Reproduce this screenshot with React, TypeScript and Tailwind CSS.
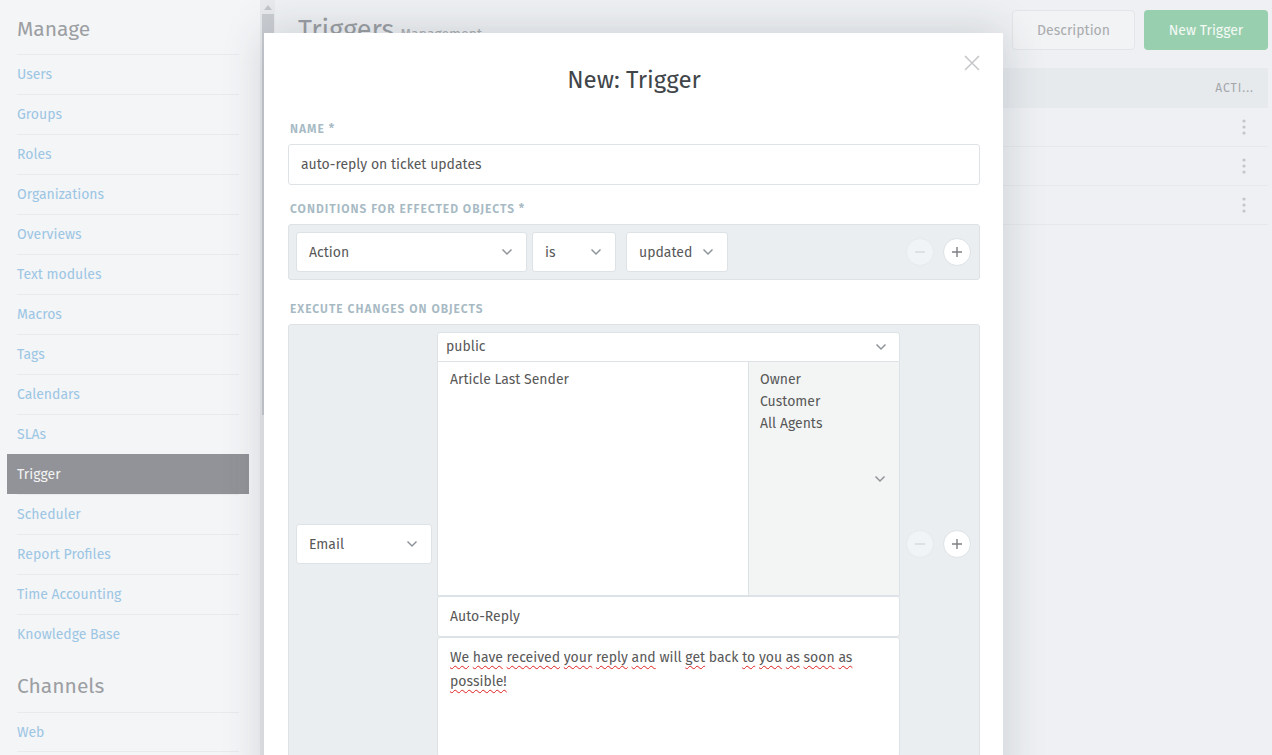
const manageItems = [
  "Users",
  "Groups",
  "Roles",
  "Organizations",
  "Overviews",
  "Text modules",
  "Macros",
  "Tags",
  "Calendars",
  "SLAs",
  "Trigger",
  "Scheduler",
  "Report Profiles",
  "Time Accounting",
  "Knowledge Base",
];

const Chevron = ({ className = "" }: { className?: string }) => (
  <svg width="12" height="8" viewBox="0 0 12 8" className={className}>
    <path d="M1.5 1.5 L6 6 L10.5 1.5" fill="none" stroke="#8f9498" strokeWidth="1.5" />
  </svg>
);

const Select = ({ label, width }: { label: string; width: string }) => (
  <div
    className={`${width} h-[40px] bg-white border border-[#dde2e6] rounded-[3px] flex items-center justify-between pl-[12px] pr-[13px] text-[14px] text-[#585858]`}
  >
    <span>{label}</span>
    <Chevron />
  </div>
);

const RoundButtons = () => (
  <div className="flex gap-[9px]">
    <div className="w-[28px] h-[28px] rounded-full bg-[#f1f4f6] border border-[#e6eaed] flex items-center justify-center">
      <svg width="10" height="10" viewBox="0 0 10 10">
        <path d="M0 5 H10" stroke="#d3d8dc" strokeWidth="1.4" />
      </svg>
    </div>
    <div className="w-[28px] h-[28px] rounded-full bg-white border border-[#dde2e6] flex items-center justify-center">
      <svg width="10" height="10" viewBox="0 0 10 10">
        <path d="M0 5 H10 M5 0 V10" stroke="#7d8084" strokeWidth="1.4" />
      </svg>
    </div>
  </div>
);

const Label = ({ children }: { children: string }) => (
  <div className="text-[12px] tracking-[1px] text-[#a7bac4] font-semibold uppercase pl-[2px] leading-[16px]">
    {children}
  </div>
);

const Wavy = ({ children }: { children: string }) => (
  <span className="underline decoration-wavy decoration-[#e02020] decoration-[1px] underline-offset-[3px]">
    {children}
  </span>
);

export default function App() {
  return (
    <div className="relative w-[1272px] h-[755px] overflow-hidden flex bg-[#eef0f3] font-['Fira_Sans',Lato,sans-serif]">
      {/* sidebar */}
      <div className="w-[260px] h-full bg-[#f4f5f7] pl-[7px] pr-[11px]">
        <div className="h-[54px] flex items-center px-[10px] pt-[5px] text-[21px] text-[#9c9fa3]">Manage</div>
        {manageItems.map((item) =>
          item === "Trigger" ? (
            <div
              key={item}
              className="h-[40px] flex items-center px-[10px] bg-[#929398] text-[14px] text-[#f3f3f3]"
            >
              {item}
            </div>
          ) : (
            <div key={item} className="mx-[10px] h-[40px] flex items-center border-t border-[#e8eaed] text-[14px] text-[#9cc6e4]">
              {item}
            </div>
          )
        )}
        <div className="h-[58px] flex items-center px-[10px] pt-[8px] text-[21px] text-[#9c9fa3]">Channels</div>
        <div className="mx-[10px] h-[40px] flex items-center border-t border-b border-[#e8eaed] text-[14px] text-[#9cc6e4]">
          Web
        </div>
      </div>

      {/* scrollbar */}
      <div className="w-[15px] h-full bg-[#e7e9ec] flex flex-col items-center">
        <div className="h-[14px] flex items-center justify-center">
          <svg width="8" height="5" viewBox="0 0 8 5">
            <path d="M0 5 L4 0 L8 5 Z" fill="#c2c5ca" />
          </svg>
        </div>
        <div className="w-[12px] h-[401px] bg-[#c9ccd1]" />
      </div>

      {/* main */}
      <div className="flex-1 pl-[23px] pr-[4px]">
        <div className="h-[68px] flex items-start justify-between pt-[10px]">
          <div className="flex items-baseline gap-[6px]">
            <span className="text-[27px] text-[#9a9ea3]">Triggers</span>
            <span className="text-[14px] text-[#a9adb1]">Management</span>
          </div>
          <div className="flex gap-[9px]">
            <div className="w-[123px] h-[40px] rounded-[4px] bg-[#f2f3f5] border border-[#e3e6e9] flex items-center justify-center text-[14px] text-[#a9abae]">
              Description
            </div>
            <div className="w-[124px] h-[40px] rounded-[4px] bg-[#98cfae] flex items-center justify-center text-[14px] text-[#f4faf6]">
              New Trigger
            </div>
          </div>
        </div>
        <div className="h-[40px] bg-[#e7eaed] flex items-center justify-end pr-[14px] text-[12px] tracking-[1px] text-[#a2a6aa]">
          ACTI...
        </div>
        {[0, 1, 2].map((i) => (
          <div key={i} className="h-[39px] border-b border-[#e6e8eb] flex items-center justify-end pr-[22px]">
            <svg width="4" height="16" viewBox="0 0 4 16">
              <circle cx="2" cy="2" r="1.6" fill="#c3c6ca" />
              <circle cx="2" cy="8" r="1.6" fill="#c3c6ca" />
              <circle cx="2" cy="14" r="1.6" fill="#c3c6ca" />
            </svg>
          </div>
        ))}
      </div>

      {/* modal */}
      <div className="absolute left-[264px] top-[33px] w-[739px] h-[760px] bg-white shadow-[0_0_40px_rgba(40,50,60,0.18)] pl-[24px] pr-[23px]">
        <div className="relative h-[88px] flex items-start justify-center pt-[31px]">
          <span className="text-[24px] leading-[32px] text-[#3f4549]">New: Trigger</span>
          <svg width="16" height="16" viewBox="0 0 16 16" className="absolute right-[0px] top-[22px]">
            <path d="M1 1 L15 15 M15 1 L1 15" stroke="#c4c6c8" strokeWidth="1.5" />
          </svg>
        </div>

        <Label>Name *</Label>
        <div className="mt-[7px] h-[41px] border border-[#dfe3e6] rounded-[3px] flex items-center px-[12px] text-[14px] text-[#585858]">
          auto-reply on ticket updates
        </div>

        <div className="mt-[16px]">
          <Label>Conditions for effected objects *</Label>
        </div>
        <div className="mt-[7px] h-[56px] bg-[#eaeef1] border border-[#dce2e6] rounded-[3px] flex items-center pl-[7px] pr-[8px]">
          <Select label="Action" width="w-[231px]" />
          <div className="w-[5px]" />
          <Select label="is" width="w-[84px]" />
          <div className="w-[10px]" />
          <Select label="updated" width="w-[102px]" />
          <div className="flex-1" />
          <RoundButtons />
        </div>

        <div className="mt-[21px]">
          <Label>Execute changes on objects</Label>
        </div>
        <div className="mt-[7px] h-[440px] bg-[#eaeef1] border border-[#dce2e6] rounded-[3px] flex items-center pl-[7px] pr-[8px]">
          <Select label="Email" width="w-[136px]" />
          <div className="w-[5px]" />
          <div className="w-[463px] flex flex-col">
            <div className="h-[30px] bg-white border border-[#dde2e6] rounded-t-[3px] flex items-center justify-between pl-[8px] pr-[12px] text-[14px] text-[#585858]">
              <span>public</span>
              <Chevron />
            </div>
            <div className="h-[234px] flex border border-t-0 border-[#dde2e6]">
              <div className="w-[310px] bg-white pl-[12px] pt-[7px] text-[14px] text-[#585858]">
                Article Last Sender
              </div>
              <div className="flex-1 bg-[#f3f5f5] border-l border-[#dde2e6] relative pl-[11px] pt-[7px] text-[14px] leading-[22px] text-[#585858]">
                <div>Owner</div>
                <div>Customer</div>
                <div>All Agents</div>
                <Chevron className="absolute right-[13px] top-[113px]" />
              </div>
            </div>
            <div className="h-[41px] bg-white border border-[#dde2e6] rounded-[3px] flex items-center px-[12px] text-[14px] text-[#585858]">
              Auto-Reply
            </div>
            <div className="h-[120px] bg-white border border-[#dde2e6] rounded-[3px] px-[12px] pt-[8px] text-[14px] leading-[24px] text-[#585858]">
              <Wavy>We</Wavy> <Wavy>have</Wavy> <Wavy>received</Wavy> <Wavy>your</Wavy> <Wavy>reply</Wavy>{" "}
              <Wavy>and</Wavy> will <Wavy>get</Wavy> back <Wavy>to</Wavy> <Wavy>you</Wavy> <Wavy>as</Wavy>{" "}
              <Wavy>soon</Wavy> <Wavy>as</Wavy> <Wavy>possible!</Wavy>
            </div>
          </div>
          <div className="flex-1" />
          <RoundButtons />
        </div>
      </div>
    </div>
  );
}
